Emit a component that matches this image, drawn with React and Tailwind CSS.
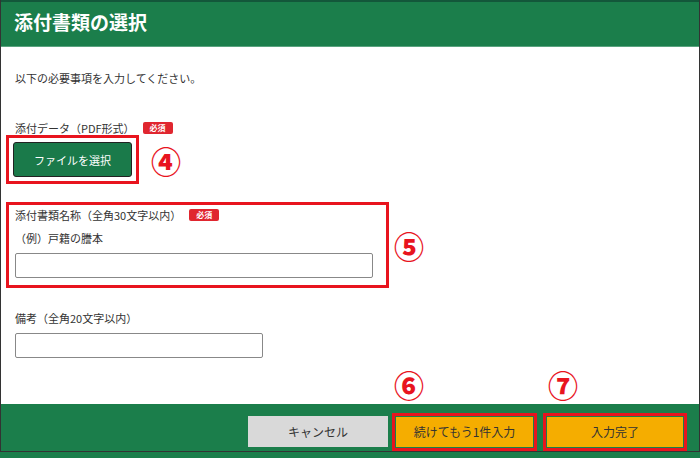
const FONT = { fontFamily: '"Noto Sans CJK JP", "Noto Sans", sans-serif' };

function Required() {
  return (
    <span className="ml-[8px] inline-flex h-[12px] w-[30px] items-center justify-center rounded-[2px] bg-[#e0262f] text-[8px] font-bold leading-none text-white">
      必須
    </span>
  );
}

function Mark({ children, className = '' }) {
  return (
    <span className={`text-[30px] font-black leading-none text-[#e8141e] ${className}`}>{children}</span>
  );
}

export default function App() {
  return (
    <div className="w-[700px] h-[458px] bg-[#1b7e4b]" style={FONT}>
      <div className="h-[452px] flex flex-col border-x border-b border-[#333]">
        {/* Header */}
        <div className="h-[47px] flex items-center px-[13px] pb-[3px] bg-[#1b7e4b] border-t-2 border-t-[#13573a] border-b border-b-[#5aa37f]">
          <h1 className="text-[19px] font-bold text-white">添付書類の選択</h1>
        </div>

        {/* Body */}
        <div className="flex-1 bg-white pl-[14px] text-[11px] leading-[16px] text-[#333]">
          <p className="mt-[23px]">以下の必要事項を入力してください。</p>

          <div className="mt-[34px] h-[16px] flex items-center">
            <span>添付データ（PDF形式）</span>
            <Required />
          </div>
          <div className="-mt-[1px] flex items-center">
            <div className="-ml-[9px] border-[3px] border-[#e8141e] p-[4px]">
              <button className="w-[119px] h-[35px] rounded-[3px] border border-[#222] bg-[#1a7a4a] text-[11px] text-white">
                ファイルを選択
              </button>
            </div>
            <Mark className="ml-[12px]">④</Mark>
          </div>

          <div className="mt-[18px] flex items-center">
            <div className="-ml-[9px] w-[383px] border-[3px] border-[#e8141e] pl-[6px] pt-[2px] pb-[7px]">
              <div className="h-[16px] flex items-center">
                <span>添付書類名称（全角30文字以内）</span>
                <Required />
              </div>
              <p className="mt-[7px]">（例）戸籍の謄本</p>
              <input className="mt-[7px] block w-[358px] h-[25px] rounded-[2px] border border-[#888]" />
            </div>
            <Mark className="ml-[5px]">⑤</Mark>
          </div>

          <p className="mt-[22px]">備考（全角20文字以内）</p>
          <input className="mt-[7px] block w-[248px] h-[25px] rounded-[2px] border border-[#888]" />

          <div className="mt-[11px] flex">
            <Mark className="ml-[379px]">⑥</Mark>
            <Mark className="ml-[124px]">⑦</Mark>
          </div>
        </div>

        {/* Footer */}
        <div className="h-[47px] flex items-start justify-end pt-[9px] pr-[12px] bg-[#1b7e4b]">
          <button className="mt-[3px] mr-[4px] w-[140px] h-[31px] bg-[#d9d9d9] text-[12px] text-[#333]">
            キャンセル
          </button>
          <div className="w-[145px] h-[38px] border-[3px] border-[#e8141e] p-[1px] mr-[6px]">
            <button className="w-full h-full bg-[#f5ad00] text-[12px] text-[#333]">続けてもう1件入力</button>
          </div>
          <div className="w-[144px] h-[38px] border-[3px] border-[#e8141e] p-[1px]">
            <button className="w-full h-full bg-[#f5ad00] text-[12px] text-[#333]">入力完了</button>
          </div>
        </div>
      </div>
    </div>
  );
}
